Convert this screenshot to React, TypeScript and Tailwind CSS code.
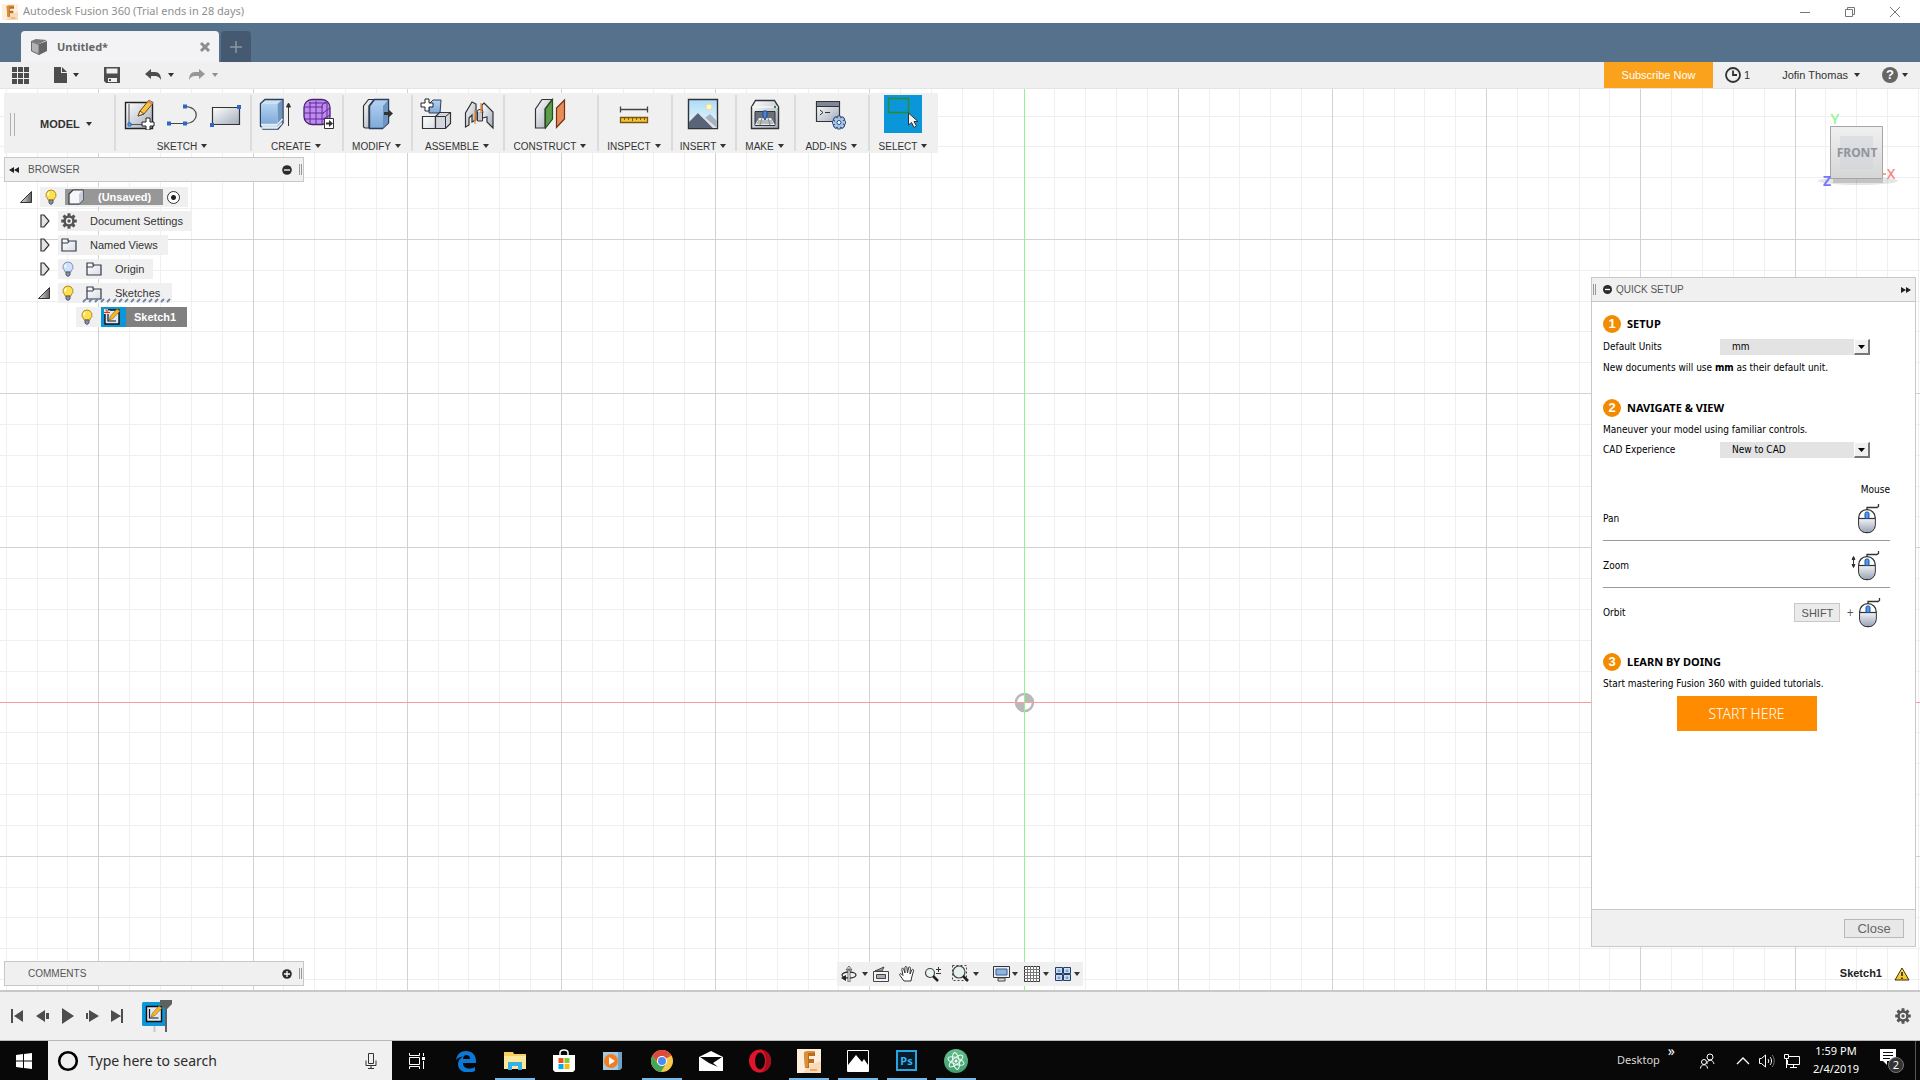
import React from "react";

const SANS = "font-['Liberation_Sans',Arial,sans-serif]";
const UI = "font-['Noto_Sans','Segoe_UI',sans-serif]";
const FORM = "font-['DejaVu_Sans_Condensed',Tahoma,'Noto_Sans',sans-serif]";

type IconProps = { children: React.ReactNode; w?: number; h?: number };

function Icon({ children, w = 32, h = 32 }: IconProps) {
  return (
    <svg width={w} height={h} viewBox={`0 0 ${w} ${h}`} fill="none" aria-hidden="true" className="shrink-0">
      {children}
    </svg>
  );
}

function Caret({ dim = false }: { dim?: boolean }) {
  return (
    <svg width="6" height="4" viewBox="0 0 6 4" aria-hidden="true" className="shrink-0">
      <path d="M0 0h6L3 4z" fill={dim ? "#8f8f8f" : "#333"} />
    </svg>
  );
}

function Defs() {
  return (
    <svg width="0" height="0" className="absolute" aria-hidden="true">
      <defs>
        <linearGradient id="steel" x1="0" y1="0" x2="1" y2="1">
          <stop offset="0" stopColor="#fff" />
          <stop offset="1" stopColor="#a3abba" />
        </linearGradient>
        <linearGradient id="paper" x1="0" y1="0" x2="1" y2="1">
          <stop offset="0" stopColor="#fff" />
          <stop offset="1" stopColor="#d9dde5" />
        </linearGradient>
        <linearGradient id="blue" x1="0" y1="0" x2="0" y2="1">
          <stop offset="0" stopColor="#b4d3f2" />
          <stop offset="1" stopColor="#7ea9d8" />
        </linearGradient>
        <linearGradient id="sky" x1="0" y1="0" x2="0" y2="1">
          <stop offset="0" stopColor="#a9dcf8" />
          <stop offset="1" stopColor="#f2fafe" />
        </linearGradient>
        <linearGradient id="mouse" x1="0" y1="0" x2="0" y2="1">
          <stop offset="0" stopColor="#f1f3f7" />
          <stop offset="1" stopColor="#9aa5b7" />
        </linearGradient>
        <linearGradient id="cube" x1="0" y1="0" x2="0" y2="1">
          <stop offset="0" stopColor="#f0f0f0" />
          <stop offset="1" stopColor="#d6d6d6" />
        </linearGradient>
        <linearGradient id="tri" x1="0" y1="0" x2="1" y2="0">
          <stop offset="0" stopColor="#e5e5e5" />
          <stop offset="1" stopColor="#606060" />
        </linearGradient>
        <linearGradient id="gold" x1="0" y1="0" x2="0" y2="1">
          <stop offset="0" stopColor="#ffef5a" />
          <stop offset="1" stopColor="#f3bd1d" />
        </linearGradient>
        <linearGradient id="atom" x1="0" y1="0" x2="0" y2="1">
          <stop offset="0" stopColor="#62bd8a" />
          <stop offset="1" stopColor="#3f9d6f" />
        </linearGradient>
      </defs>
    </svg>
  );
}

function FusionMark({ size }: { size: number }) {
  return (
    <svg width={size} height={size} viewBox="0 0 24 24" aria-hidden="true" className="shrink-0">
      <path d="M0 0h24v24H0z" fill="#fdeedd" />
      <path d="M12 16l12-4v12H6z" fill="#f8d9b8" />
      <path d="M7 3h11v4h-6v3h5v4h-5v5H8z" fill="#b96c1f" />
      <path d="M7 3l3-1h8l-1 2h-6v14l-3 1z" fill="#dd8f38" />
      <path d="M13 20h7v2h-7z" fill="#f0a868" />
    </svg>
  );
}

function Plus({ x, y }: { x: number; y: number }) {
  return (
    <path
      transform={`translate(${x} ${y})`}
      d="M4 0h4v4h4v4H8v4H4V8H0V4h4z"
      fill="#fff"
      stroke="#222"
      strokeWidth="1"
    />
  );
}

function Gear({ size, color, hole = "#f0f0f0" }: { size: number; color: string; hole?: string }) {
  return (
    <svg width={size} height={size} viewBox="0 0 16 16" aria-hidden="true" className="shrink-0">
      <g fill={color}>
        <circle cx="8" cy="8" r="5.7" />
        {[0, 45, 90, 135].map((a) => (
          <rect key={a} x="6.5" y="0.2" width="3" height="15.6" rx="0.5" transform={`rotate(${a} 8 8)`} />
        ))}
      </g>
      <circle cx="8" cy="8" r="3.2" fill={hole} />
      <circle cx="8" cy="8" r="1.7" fill={color} />
    </svg>
  );
}

/* ---------- window chrome ---------- */

function TitleBar() {
  return (
    <header className={`${UI} flex h-[23px] items-center justify-between bg-white`}>
      <div className="flex items-center gap-[5px] pl-[2px] text-[11px] text-[#8f8f8f]">
        <FusionMark size={16} />
        <h1>Autodesk Fusion 360 (Trial ends in 28 days)</h1>
      </div>
      <div className="flex items-center gap-[33px] pr-[19px]">
        <button aria-label="Minimize">
          <Icon w={12} h={12}><path d="M1 6.500h10" stroke="#777" /></Icon>
        </button>
        <button aria-label="Restore">
          <Icon w={12} h={12}>
            <path d="M1.500 3.500h7v7h-7zM3.500 3V1.500h7v7H9" stroke="#777" />
          </Icon>
        </button>
        <button aria-label="Close window">
          <Icon w={12} h={12}><path d="M1 1l10 10M11 1L1 11" stroke="#777" /></Icon>
        </button>
      </div>
    </header>
  );
}

function TabStrip() {
  return (
    <nav className="flex h-[39px] items-end gap-[2px] bg-[#56718c] pl-[21px]" aria-label="Documents">
      <div className="flex h-[31px] w-[198px] items-center rounded-t bg-[#f3f3f6] pr-[8px] pl-[10px]">
        <Icon w={16} h={16}>
          <path d="M0 2l8 3v11L0 12z" fill="#b2b2b2" />
          <path d="M16 2v10l-8 4V5z" fill="#646464" />
          <path d="M0 2l5-2 11 1-8 4z" fill="#7a7a7a" />
          <path d="M0.500 2.500l7.500 3V15.500L0.500 12z" stroke="#6b6b6b" />
        </Icon>
        <span className={`${UI} ml-[10px] pt-[2px] text-[11px] font-bold text-[#666]`}>Untitled*</span>
        <button aria-label="Close tab" className="ml-auto">
          <Icon w={12} h={12}><path d="M2 2l8 8M10 2l-8 8" stroke="#8c8c8c" strokeWidth="3" /></Icon>
        </button>
      </div>
      <button aria-label="New tab" className="flex h-[31px] w-[30px] items-center justify-center rounded-t bg-[#455a70]">
        <Icon w={12} h={12}><path d="M6 0v12M0 6h12" stroke="#8d97a3" strokeWidth="1.500" /></Icon>
      </button>
    </nav>
  );
}

function QuickBar() {
  return (
    <div className={`${SANS} flex h-[27px] items-center justify-between border-b border-[#e4e4e4] bg-[#f0f0f0] text-[11px] text-[#333]`}>
      <div className="flex items-center pl-[12px]">
        <button aria-label="Data panel">
          <Icon w={17} h={17}>
            <path d="M0 0h5v5H0zM6 0h5v5H6zM12 0h5v5h-5zM0 6h5v5H0zM6 6h5v5H6zM12 6h5v5h-5zM0 12h5v5H0zM6 12h5v5H6zM12 12h5v5h-5z" fill="#4d4d4d" />
          </Icon>
        </button>
        <button aria-label="File" className="ml-[25px] flex items-center gap-[6px]">
          <Icon w={13} h={16}><path d="M0 0h7v6h6v10H0zM8 0l5 5H8z" fill="#4d4d4d" /></Icon>
          <Caret />
        </button>
        <button aria-label="Save" className="ml-[25px]">
          <Icon w={16} h={16}>
            <path d="M0 0h16v16H2l-2-2z" fill="#4d4d4d" />
            <path d="M2.500 1.500h11v5h-11zM4 11h9v4H4z" fill="#f0f0f0" />
            <path d="M5 12h2v2H5z" fill="#4d4d4d" />
          </Icon>
        </button>
        <button aria-label="Undo" className="ml-[25px] flex items-center gap-[7px]">
          <Icon w={16} h={12}><path d="M0 5l6-5v3h4c4 0 6 3 6 8-2-3-3-4-6-4H6v3z" fill="#4d4d4d" /></Icon>
          <Caret />
        </button>
        <button aria-label="Redo" className="ml-[15px] flex items-center gap-[7px]">
          <Icon w={16} h={12}><path d="M16 5l-6-5v3H6C2 3 0 6 0 11c2-3 3-4 6-4h4v3z" fill="#979797" /></Icon>
          <Caret dim />
        </button>
      </div>
      <div className="flex items-center">
        <button className="h-[26px] w-[109px] bg-[#faa21c] text-center text-white">Subscribe Now</button>
        <button aria-label="Job status, 1" className="ml-[12px] flex items-center gap-[3px]">
          <Icon w={16} h={16}>
            <circle cx="8" cy="8" r="7" stroke="#333" strokeWidth="1.800" />
            <path d="M8 3.500V8h4" stroke="#333" strokeWidth="1.800" />
          </Icon>
          1
        </button>
        <button className="ml-[32px] flex items-center gap-[6px]">Jofin Thomas <Caret /></button>
        <button aria-label="Help" className="mr-[12px] ml-[22px] flex items-center gap-[4px]">
          <span className="flex size-[16px] items-center justify-center rounded-full bg-[#666] text-[13px] font-bold text-white">?</span>
          <Caret />
        </button>
      </div>
    </div>
  );
}

/* ---------- toolbar ---------- */

const sketchIcon = (
  <Icon>
    <path d="M2.500 4.500h27v26h-27z" fill="url(#steel)" stroke="#222" strokeWidth="1.400" />
    <path d="M6 6v20.500M6 26.500h16" stroke="#555" />
    <path d="M5 25h3v3H5z" fill="#58aef5" stroke="#2268c8" />
    <path d="M15 18l2-5L26 2l4 3-9 11z" fill="#f9c33a" stroke="#6a4a1c" />
    <path d="M26 2l4 3-1.500 2-4-3z" fill="#d98a63" />
    <path d="M15 18l2-5 4 3z" fill="#f6e3c3" stroke="#6a4a1c" />
    <Plus x={19} y={20} />
  </Icon>
);
const lineIcon = (
  <Icon>
    <path d="M3 25.500h16c15 0 15-17 0-17" stroke="#444" strokeWidth="1.200" />
    <path d="M1 23.500h4v4H1zM17 23.500h4v4h-4zM17 6.500h4v4h-4z" fill="#2f66cc" />
  </Icon>
);
const rectIcon = (
  <Icon>
    <path d="M3.500 9.500h27v17h-27z" fill="url(#steel)" stroke="#333" strokeWidth="1.200" />
    <path d="M1 25h4v4H1zM28 7h4v4h-4z" fill="#2f66cc" />
  </Icon>
);
const extrudeIcon = (
  <Icon>
    <path d="M1.500 28V5.500L6 1.500h18V25l-5 6H4z" fill="#cfe1f4" stroke="#2b3f5c" strokeWidth="1.400" />
    <path d="M2 6h16v20H2z" fill="url(#blue)" />
    <path d="M18.500 6L23 2v23l-4.500 4z" fill="#6f94bf" />
    <path d="M2 26.500h16.500L23.500 21M2 30h16l5-5" stroke="#e8eef5" strokeWidth="1.500" />
    <path d="M29.500 28V7M27.500 9l2-4 2 4z" stroke="#333" fill="#333" />
  </Icon>
);
const formIcon = (
  <Icon>
    <rect x="2" y="1.500" width="26" height="25" rx="8" fill="#c08bf0" stroke="#44256c" strokeWidth="1.300" />
    <path d="M2 9h19M2 15h20M3 21h19M8 4v22M14 3v23M20 7v19M7 5h18M20 7l5-4M21 15l7-5M21 21l7-4M25 4v20" stroke="#5f2d96" />
    <path d="M22.500 20.500h9v10h-9z" fill="#fff" stroke="#333" />
    <path d="M24 24.500h3V22l4 3.500-4 3.500v-2.500h-3z" fill="#333" />
  </Icon>
);
const modifyIcon = (
  <Icon>
    <path d="M2.500 29V8l5-6.500H13L8 8v22H4z" fill="url(#steel)" stroke="#333" strokeWidth="1.200" />
    <path d="M8.500 30.500V8l5-6.500h14V25l-6 5.500z" fill="url(#blue)" stroke="#2b3f5c" strokeWidth="1.400" />
    <path d="M22 8l5-6v23l-5 5z" fill="#6f94bf" />
    <path d="M23 14h4v-3l5 4.500-5 4.500v-3h-4z" fill="#333" />
  </Icon>
);
const componentIcon = (
  <Icon>
    <path d="M9 15V6l4-4h8l-1 13z" fill="url(#blue)" stroke="#2b3f5c" />
    <path d="M2.500 18.500h13v12h-13z" fill="url(#paper)" stroke="#333" strokeWidth="1.200" />
    <path d="M15.500 18.500l4-4h11v11l-5 5h-10z" fill="#d3d6de" stroke="#333" strokeWidth="1.200" />
    <path d="M15.500 18.500h10l5-4M25.500 18.500v12" stroke="#333" />
    <Plus x={1} y={1} />
  </Icon>
);
const jointIcon = (
  <Icon>
    <path d="M2.500 29V15L9 4l4 2v16l-4 2v-7l-3 3v7z" fill="url(#steel)" stroke="#333" strokeWidth="1.200" />
    <path d="M21 5l9 9v16l-6-6v-5l-5 1V7z" fill="url(#steel)" stroke="#333" strokeWidth="1.200" />
    <ellipse cx="17" cy="14" rx="3" ry="2.500" fill="#e8eaef" stroke="#333" />
    <path d="M14.500 14v9h5v-9" fill="#c3c9d3" stroke="#333" />
    <path d="M12 12v14M18 5v10" stroke="#f0872d" strokeWidth="1.300" />
  </Icon>
);
const constructIcon = (
  <Icon>
    <path d="M1.500 30V11L8 1.500h10L11 11v19z" fill="url(#steel)" stroke="#333" strokeWidth="1.200" />
    <path d="M11.500 30V11l7-9.500V21z" fill="#5c9e49" stroke="#264d1d" strokeWidth="1.200" />
    <path d="M22.500 29.500V10l8-8v19z" fill="#e88d58" stroke="#703312" strokeWidth="1.200" />
  </Icon>
);
const inspectIcon = (
  <Icon>
    <path d="M2 11.500h28M2.500 8.500v6M29.500 8.500v6" stroke="#444" strokeWidth="1.300" />
    <path d="M2.500 19.500h27v5h-27z" fill="#f4c52f" stroke="#7a5614" strokeWidth="1.300" />
    <path d="M6.500 20v2M10.500 20v2M14.500 20v3M18.500 20v2M22.500 20v2M26.500 20v2" stroke="#7a5614" />
  </Icon>
);
const insertIcon = (
  <Icon>
    <path d="M1.500 1.500h29v29h-29z" fill="url(#sky)" stroke="#333" strokeWidth="1.400" />
    <circle cx="22" cy="9" r="3" fill="#fff8c8" stroke="#f4d98a" />
    <path d="M14 23l9-7 7 7v7H14z" fill="#a7b2c0" />
    <path d="M2 24l9-9 15 15H2z" fill="#596477" />
    <path d="M11 15l15 15h4L14 16z" fill="#dfe4ea" />
  </Icon>
);
const makeIcon = (
  <Icon>
    <path d="M2.500 9l4-6.500h19l4 6.500v21.500h-27z" fill="url(#steel)" stroke="#333" strokeWidth="1.400" />
    <path d="M3 9h26" stroke="#fff" />
    <path d="M6 13.500h20v14H6z" fill="#6a6f79" stroke="#333" />
    <path d="M6 27l4-7h12l4 7z" fill="#e8eaee" />
    <path d="M9 23h14M8 25h16M13 20l-2 7M19 20l2 7" stroke="#888" />
    <path d="M14 13h4v5l-2 4-2-4z" fill="#4686dd" stroke="#1f4a8c" />
    <path d="M25 8h2v2h-2z" fill="#179a22" />
  </Icon>
);
const addinsIcon = (
  <Icon>
    <path d="M1.500 3.500h23v20h-23z" fill="url(#steel)" stroke="#333" strokeWidth="1.200" />
    <path d="M2 4h22v4H2z" fill="#7d8796" />
    <path d="M2 8.500h22" stroke="#333" />
    <path d="M5 12l3 2.500L5 17M10 14.500h5" stroke="#333" />
    <g fill="#a9c6e8" stroke="#2d4a77">
      {[0, 45, 90, 135].map((a) => (
        <rect key={a} x="22" y="18" width="4" height="13" rx="1" transform={`rotate(${a} 24 24.500)`} />
      ))}
    </g>
    <circle cx="24" cy="24.500" r="4.500" fill="#a9c6e8" />
    <circle cx="24" cy="24.500" r="2" fill="#fff" stroke="#2d4a77" />
  </Icon>
);
const selectIcon = (
  <span className="flex size-[38px] items-center justify-center bg-[#0a96d8]">
    <Icon w={38} h={38}>
      <path d="M4.500 3.500h20v14h-20z" stroke="#2f8a2c" strokeWidth="1.400" />
      <path d="M24.500 18v12l3-2.500 2.500 5 2.500-1.500-2.500-4.500h4z" fill="#f4f4f4" stroke="#333" />
    </Icon>
  </span>
);

type Group = { label: string; width: string; icons: React.ReactNode[] };

const groups: Group[] = [
  { label: "SKETCH", width: "w-[136px]", icons: [sketchIcon, lineIcon, rectIcon] },
  { label: "CREATE", width: "w-[92px]", icons: [extrudeIcon, formIcon] },
  { label: "MODIFY", width: "w-[69px]", icons: [modifyIcon] },
  { label: "ASSEMBLE", width: "w-[92px]", icons: [componentIcon, jointIcon] },
  { label: "CONSTRUCT", width: "w-[94px]", icons: [constructIcon] },
  { label: "INSPECT", width: "w-[74px]", icons: [inspectIcon] },
  { label: "INSERT", width: "w-[64px]", icons: [insertIcon] },
  { label: "MAKE", width: "w-[59px]", icons: [makeIcon] },
  { label: "ADD-INS", width: "w-[74px]", icons: [addinsIcon] },
  { label: "SELECT", width: "w-[70px]", icons: [selectIcon] },
];

function Toolbar() {
  return (
    <div className={`${SANS} flex h-[60px] w-fit items-start bg-[#f0f0f0] pt-[2px] text-[10px] text-[#333]`} role="toolbar">
      <div className="flex w-[110px] items-center self-center">
        <span className="ml-[6px] h-[23px] w-[5px] border-x border-[#b0b0b0]" />
        <button className="ml-[25px] flex items-center gap-[6px] text-[11px] font-bold">MODEL <Caret /></button>
      </div>
      {groups.map((g) => (
        <div key={g.label} className={`${g.width} flex h-[56px] flex-col items-center justify-between border-l-2 border-[#dcdcdc] pr-[2px]`}>
          <div className="flex h-[38px] items-center gap-[11px]">
            {g.icons.map((icon, i) => (
              <button key={i} aria-label={`${g.label} tool ${i + 1}`}>{icon}</button>
            ))}
          </div>
          <button className="flex h-[10px] items-center gap-[4px]">{g.label} <Caret /></button>
        </div>
      ))}
    </div>
  );
}

/* ---------- browser tree ---------- */

function Bulb({ off = false }: { off?: boolean }) {
  return (
    <Icon w={12} h={16}>
      <path d="M6 1a5 5 0 0 0-3 9v1h6v-1a5 5 0 0 0-3-9z" fill={off ? "#cfe2fb" : "#ffe14a"} stroke={off ? "#7f93b8" : "#b08a2c"} />
      <path d="M4 3.500c-1 1-1 2-1 3" stroke="#fff" strokeWidth="1.500" />
      <path d="M4 11h4v3l-2 1.500L4 14z" fill="#8890a0" stroke="#555c6c" />
    </Icon>
  );
}

function Folder() {
  return (
    <Icon w={16} h={14}>
      <path d="M1 13V1h6v2h8v10z" fill="url(#paper)" stroke="#333a48" strokeWidth="1.200" />
      <path d="M1 5h6l1-2" stroke="#333a48" />
    </Icon>
  );
}

function Closed() {
  return <Icon w={10} h={14}><path d="M1 1l3 0 5 6-5 6H1z" fill="#e4e4e4" stroke="#333" strokeWidth="1.200" /></Icon>;
}

function Open() {
  return <Icon w={12} h={12}><path d="M11.500 0.500v11H0.500z" fill="url(#tri)" stroke="#333" /></Icon>;
}

function SketchThumb() {
  return (
    <Icon w={16} h={16}>
      <path d="M1 1h14v14H1z" fill="#dfe9f7" stroke="#111" strokeWidth="1.400" />
      <path d="M4 5v7h8" stroke="#111" strokeWidth="1.200" />
      <path d="M5 11l1.500-4L13 0l3 2-7 7.500z" fill="#f7b51e" stroke="#8f5c12" strokeWidth="0.600" />
      <path d="M0 0h4v1.500h2V5H0z" fill="#f6d9cf" />
      <path d="M1.500 1h2M0 3.500h6M3 1v3" stroke="#c8402a" strokeWidth="1.200" />
    </Icon>
  );
}

function PanelBar({ title, open }: { title: string; open: boolean }) {
  return (
    <div className={`${SANS} flex h-[25px] w-[300px] items-center border border-[#c8c8c8] bg-[#f0f0f0] text-[10px] text-[#555]`}>
      <span className="flex w-[23px] justify-start pl-[4px]">
        {open && <Icon w={10} h={6}><path d="M5 0v6L0 3zM10 0v6L5 3z" fill="#222" /></Icon>}
      </span>
      <h2>{title}</h2>
      <button aria-label={open ? "Collapse" : "Expand"} className="ml-auto">
        <Icon w={10} h={10}>
          <circle cx="5" cy="5" r="4.800" fill="#2b2b2b" />
          <path d={open ? "M2 5h6" : "M2 5h6M5 2v6"} stroke="#fff" strokeWidth="1.300" />
        </Icon>
      </button>
      <span className="mr-[1px] ml-[7px] h-[11px] w-[3px] border-x border-[#999]" />
    </div>
  );
}

function Tree() {
  const box = "flex h-[20px] items-center bg-[#f0f0f0]";
  return (
    <ul className={`${SANS} mt-[5px] flex flex-col gap-[4px] text-[11px] text-[#333]`}>
      <li className="flex items-center pl-[16px]">
        <Open />
        <div className={`${box} ml-[8px] pr-[8px] pl-[5px]`}>
          <Bulb />
          <span className="mr-[4px] ml-[8px] flex h-[16px] w-[98px] items-center gap-[14px] bg-[#979797] pl-[3px] font-bold text-white">
            <Icon w={16} h={16}>
              <path d="M1 5l4-4h10v10l-4 4H1z" fill="#f5f7fa" stroke="#333a48" strokeWidth="1.200" />
              <path d="M11 5l4-4v10l-4 4z" fill="#c9ced8" />
            </Icon>
            (Unsaved)
          </span>
          <input type="radio" name="active" defaultChecked aria-label="Activate component" className="size-[13px] appearance-none rounded-full border border-[#333] bg-white bg-[radial-gradient(circle,#222_2px,transparent_3px)]" />
        </div>
      </li>
      <li className="flex items-center pl-[36px]">
        <Closed />
        <div className={`${box} ml-[8px] gap-[13px] pr-[8px] pl-[3px]`}><Gear size={16} color="#555" />Document Settings</div>
      </li>
      <li className="flex items-center pl-[36px]">
        <Closed />
        <div className={`${box} ml-[8px] gap-[13px] pr-[10px] pl-[3px]`}><Folder />Named Views</div>
      </li>
      <li className="flex items-center pl-[36px]">
        <Closed />
        <div className={`${box} ml-[8px] pr-[9px] pl-[4px]`}><Bulb off /><span className="mr-[13px] ml-[12px]"><Folder /></span>Origin</div>
      </li>
      <li className="flex items-center pl-[34px]">
        <Open />
        <div className={`${box} relative ml-[8px] pr-[12px] pl-[4px]`}>
          <Bulb /><span className="mr-[13px] ml-[12px]"><Folder /></span>Sketches
          <svg width="90" height="5" viewBox="0 0 90 5" className="absolute bottom-0 left-[24px]" aria-hidden="true">
            {Array.from({ length: 15 }, (_, i) => (
              <path key={i} d={`M${i * 6 + 1} 4l3-3`} stroke="#6d83a8" strokeWidth="1.800" />
            ))}
          </svg>
        </div>
      </li>
      <li className="flex items-center pl-[72px]">
        <div className={`${box} w-[25px] pl-[5px]`}><Bulb /></div>
        <div className="flex h-[20px] w-[25px] items-center pl-[3px] bg-[#0a96d8]"><SketchThumb /></div>
        <div className="flex h-[20px] w-[61px] items-center bg-[#808080] pl-[8px] font-bold text-white">Sketch1</div>
      </li>
    </ul>
  );
}

/* ---------- canvas ---------- */

function CanvasGrid() {
  const step = 30.84;
  const cx = 1024;
  const cy = 613;
  const range = (n: number) => Array.from({ length: 2 * n + 1 }, (_, i) => i - n);
  const cols = range(60).filter((i) => i !== 0);
  const rows = range(40).filter((i) => i !== 0);
  const vLine = (i: number) => <path key={i} d={`M${Math.floor(cx + i * step) + 0.5} 0v4000`} />;
  const hLine = (i: number) => <path key={i} d={`M0 ${Math.floor(cy + i * step) + 0.5}h6000`} />;
  return (
    <svg className="absolute inset-0 h-full w-full" aria-hidden="true">
      <g stroke="#efefef">
        {cols.filter((i) => i % 5 !== 0).map(vLine)}
        {rows.filter((i) => i % 5 !== 0).map(hLine)}
      </g>
      <g stroke="#d2d2d2">
        {cols.filter((i) => i % 5 === 0).map(vLine)}
        {rows.filter((i) => i % 5 === 0).map(hLine)}
      </g>
      <circle cx={cx + 0.5} cy={cy + 0.5} r="8.500" fill="#fff" stroke="#b9b9b9" strokeWidth="2.500" />
      <path d={`M${cx} ${cy}v-9a9 9 0 0 1 9 9zM${cx} ${cy}v9a9 9 0 0 1-9-9z`} fill="#b9b9b9" />
      <path d={`M0 ${cy + 0.5}h6000`} stroke="#f99" />
      <path d={`M${cx + 0.5} 0v4000`} stroke="#8df58d" />
    </svg>
  );
}

function ViewCube() {
  return (
    <svg width="88" height="90" viewBox="0 0 88 90" className="mt-[15px] mr-[17px] self-end" role="img" aria-label="View cube">
      <ellipse cx="43" cy="77" rx="40" ry="4" fill="#000" opacity="0.100" />
      <path d="M18 75h50v4H18z" fill="#000" opacity="0.150" />
      <path d="M15.500 22.500h52v52h-52z" fill="url(#cube)" stroke="#a5a5a5" />
      <path d="M25 32h33v33H25z" fill="#cfd3da" opacity="0.500" />
      <g className="font-['Noto_Sans',sans-serif]" textAnchor="middle">
        <text x="42" y="53" fontSize="12" fontWeight="700" fill="#92959c">FRONT</text>
        <text x="20" y="20" fontSize="15" fontWeight="500" fill="#8df58d">Y</text>
        <text x="12" y="82" fontSize="14" fontWeight="700" fill="#7777fa">Z</text>
        <text x="76" y="75" fontSize="14" fontWeight="500" fill="#f98080">X</text>
      </g>
      <path d="M68 70h3" stroke="#f98080" strokeWidth="1.500" />
    </svg>
  );
}

/* ---------- quick setup ---------- */

function Step({ n, title, className }: { n: number; title: string; className: string }) {
  return (
    <h3 className={`${className} ${UI} flex h-[18px] items-center gap-[6px] text-[11px] font-bold`}>
      <span className="flex size-[18px] items-center justify-center rounded-full bg-[#f38b00] font-['Liberation_Sans',sans-serif] text-[13px] text-white">{n}</span>
      {title}
    </h3>
  );
}

function Field({ id, label, value, className }: { id: string; label: string; value: string; className: string }) {
  return (
    <div className={`${className} flex h-[16px] items-center`}>
      <label htmlFor={id} className="w-[117px]">{label}</label>
      <div className="relative h-[16px] w-[150px]">
        <select id={id} className="block h-[16px] w-full appearance-none bg-[#e3e3e3] pl-[12px] leading-[16px]">
          <option>{value}</option>
        </select>
        <span className="pointer-events-none absolute top-0 right-0 flex h-[16px] w-[16px] items-center justify-center border-t border-r-2 border-b-2 border-l border-t-white border-r-[#777] border-b-[#777] border-l-white bg-[#f0f0f0]">
          <svg width="7" height="4" viewBox="0 0 7 4" aria-hidden="true"><path d="M0 0h7L3.500 4z" fill="#000" /></svg>
        </span>
      </div>
    </div>
  );
}

function MouseIcon({ arrows = false }: { arrows?: boolean }) {
  return (
    <Icon w={30} h={32}>
      {arrows && <path d="M3.500 8v8M2 9.500l1.500-3L5 9.500zM2 14.500l1.500 3 1.500-3z" stroke="#333" fill="#333" />}
      <path d="M17 7V4.500h10l1.500-1V1" stroke="#333" strokeWidth="1.300" />
      <rect x="8.700" y="6.700" width="16.500" height="23" rx="8" fill="#fff" stroke="#333" strokeWidth="1.300" />
      <path d="M9.300 15.500h15.300v6c0 5-3 7.600-7.600 7.600s-7.700-2.600-7.700-7.600z" fill="url(#mouse)" />
      <path d="M9 15.500h16" stroke="#333" strokeWidth="1.200" />
      <rect x="15" y="9" width="4" height="6.500" rx="1.500" fill="#4d9bf0" stroke="#1a4d96" />
    </Icon>
  );
}

function QuickSetup() {
  return (
    <section aria-label="Quick setup" className="mt-[83px] mr-[4px] flex w-[325px] flex-1 flex-col border border-[#c8c8c8] bg-white">
      <header className={`${SANS} flex h-[24px] items-center border-b border-[#c8c8c8] bg-[#f0f0f0] text-[10px] text-[#555]`}>
        <span className="ml-[1px] h-[11px] w-[3px] border-x border-[#999]" />
        <button aria-label="Collapse" className="mr-[4px] ml-[7px]">
          <Icon w={9} h={9}>
            <circle cx="4.500" cy="4.500" r="4.500" fill="#2b2b2b" />
            <path d="M2 4.500h5" stroke="#fff" strokeWidth="1.300" />
          </Icon>
        </button>
        <h2>QUICK SETUP</h2>
        <span className="mr-[4px] ml-auto">
          <Icon w={10} h={6}><path d="M0 0v6l5-3zM5 0v6l5-3z" fill="#222" /></Icon>
        </span>
      </header>
      <div className={`${FORM} flex flex-1 flex-col pr-[25px] pl-[11px] text-[10px] leading-[16px] text-black`}>
        <Step n={1} title="SETUP" className="mt-[13px]" />
        <Field id="units" label="Default Units" value="mm" className="mt-[6px]" />
        <p className="mt-[5px]">New documents will use <b>mm</b> as their default unit.</p>
        <Step n={2} title="NAVIGATE & VIEW" className="mt-[23px]" />
        <p className="mt-[5px]">Maneuver your model using familiar controls.</p>
        <Field id="cad" label="CAD Experience" value="New to CAD" className="mt-[4px]" />
        <p className="mt-[24px] text-right">Mouse</p>
        <div className="flex h-[43px] items-center justify-between border-b border-[#999] pr-[10px]">Pan<MouseIcon /></div>
        <div className="flex h-[47px] items-center justify-between border-b border-[#999] pt-[4px] pr-[10px]">Zoom<MouseIcon arrows /></div>
        <div className="flex h-[47px] items-center pt-[2px] pr-[9px]">
          <span>Orbit</span>
          <kbd className="mr-[6px] ml-auto flex h-[19px] w-[46px] items-center justify-center border border-[#c8c8c8] bg-[#ebebeb] font-['Liberation_Sans',sans-serif] text-[11px] text-[#555]">SHIFT</kbd>
          <span className="-mr-[3px] text-[#555]">+</span>
          <MouseIcon />
        </div>
        <Step n={3} title="LEARN BY DOING" className="mt-[18px]" />
        <p className="mt-[5px]">Start mastering Fusion 360 with guided tutorials.</p>
        <button className="mt-[4px] h-[35px] w-[140px] self-center bg-[#ff8c00] font-['Noto_Sans',sans-serif] text-[14px] font-light text-white">START HERE</button>
      </div>
      <footer className="flex h-[37px] items-center justify-end border-t border-[#c8c8c8] bg-[#f0f0f0] pr-[11px]">
        <button className={`${SANS} h-[19px] w-[60px] border border-[#b8b8b8] bg-[#e8e8e8] text-[13px] leading-[17px] text-[#666]`}>Close</button>
      </footer>
    </section>
  );
}

/* ---------- bottom bars ---------- */

function NavBar() {
  return (
    <div className="flex h-[24px] items-center bg-[#f0f0f0] pr-[3px] pl-[4px]" role="toolbar" aria-label="Navigation">
      <button aria-label="Orbit" className="flex items-center gap-[5px]">
        <Icon w={16} h={16}>
          <ellipse cx="8" cy="9" rx="7" ry="3" stroke="#333" strokeWidth="1.300" />
          <path d="M7 3h2v13H7zM5 4l3-4 3 4z" fill="#fff" stroke="#444" strokeWidth="0.800" />
          <path d="M0 12l5-3v6z" fill="#222" />
        </Icon>
        <Caret />
      </button>
      <button aria-label="Look at" className="ml-[5px]">
        <Icon w={16} h={16}>
          <path d="M2 5l9-4-2 4z" fill="#aab" stroke="#444" />
          <path d="M0.500 5.500h15v10H0.500z" fill="#f4f5f7" stroke="#444" />
          <path d="M3.500 8.500h9v4h-9z" fill="#a5acba" stroke="#444" />
        </Icon>
      </button>
      <button aria-label="Pan" className="ml-[10px]">
        <Icon w={16} h={16}>
          <path d="M5 15L1 9.500c-1-1.500.5-2.500 1.500-1.500L4 9.500 2.800 3.500c-.3-1.500 1.500-1.700 1.900-.4L6 7 5.900 1.600c0-1.500 1.900-1.500 2 0L8.500 7l1-5.200c.3-1.300 2-1 1.900.4L11 8l1.800-4c.6-1.200 2.200-.6 1.800.6L12.500 12l-.5 3z" fill="#fff" stroke="#333" />
        </Icon>
      </button>
      <button aria-label="Zoom" className="ml-[9px]">
        <Icon w={18} h={16}>
          <circle cx="6" cy="7" r="4.500" fill="#e9f2f5" stroke="#444" strokeWidth="1.200" />
          <path d="M9 10l5 5" stroke="#222" strokeWidth="2.500" />
          <path d="M12 3.500h5M14.500 1v5M12 7.500h5" stroke="#333" />
        </Icon>
      </button>
      <button aria-label="Zoom window" className="ml-[9px] flex items-center gap-[4px]">
        <Icon w={18} h={17}>
          <path d="M1.500 0.500h14v15h-14z" stroke="#444" strokeDasharray="2 2" />
          <circle cx="8" cy="7" r="6" fill="#e4f1ee" stroke="#444" strokeWidth="1.200" />
          <path d="M12 11l5 5" stroke="#222" strokeWidth="2.500" />
        </Icon>
        <Caret />
      </button>
      <button aria-label="Display settings" className="ml-[14px] flex items-center gap-[2px]">
        <Icon w={17} h={16}>
          <path d="M0.500 0.500h16v11h-16z" fill="#e8eef6" stroke="#333" />
          <path d="M3 3h11v6H3z" fill="#8fb4e2" stroke="#3a5c90" />
          <path d="M5 12h7v3H5z" fill="#ddd" stroke="#444" />
        </Icon>
        <Caret />
      </button>
      <button aria-label="Grid settings" className="ml-[6px] flex items-center gap-[3px]">
        <Icon w={16} h={16}>
          <path d="M0.500 0.500h15v15h-15z" fill="#fff" stroke="#333" />
          <path d="M3.500 0v16M6.500 0v16M9.500 0v16M12.500 0v16M0 3.500h16M0 6.500h16M0 9.500h16M0 12.500h16" stroke="#777" />
        </Icon>
        <Caret />
      </button>
      <button aria-label="Viewports" className="ml-[6px] flex items-center gap-[3px]">
        <Icon w={16} h={14}>
          <path d="M0.500 0.500h7v6h-7zM8.500 0.500h7v6h-7zM0.500 7.500h7v6h-7zM8.500 7.500h7v6h-7z" fill="#c9dcf3" stroke="#263f66" />
          <path d="M3 3h2v1.500H3zM11 3h2v1.500h-2zM3 10h2v1.500H3zM11 10h2v1.500h-2z" fill="#8fb4e2" stroke="#7a9fd0" />
        </Icon>
        <Caret />
      </button>
    </div>
  );
}

function Timeline() {
  const items: [string, string][] = [
    ["Go to start", "M0 1h2v14H0zM12 2v12L3 8z"],
    ["Step back", "M9 2v12L0 8zM10 5h3v6h-3z"],
    ["Play", "M1 0l12 8-12 8z"],
    ["Step forward", "M0 5h2v6H0zM3 2v12l10-6z"],
    ["Go to end", "M0 2v12l10-6zM10 1h2v14h-2z"],
  ];
  return (
    <div className="flex h-[51px] items-center justify-between border-t-2 border-b border-t-[#c8c8c8] border-b-[#b8b8b8] bg-[#f0f0f0] pr-[9px] pl-[11px]">
      <div className="flex items-center gap-[12px]">
        {items.map(([label, d]) => (
          <button key={label} aria-label={label}><Icon w={13} h={16}><path d={d} fill="#4d4d4d" /></Icon></button>
        ))}
        <button aria-label="Sketch1 feature" className="ml-[6px]">
          <Icon w={32} h={34}>
            <path d="M12.500 26v7" stroke="#c8c8c8" strokeWidth="2" />
            <rect x="0" y="3" width="24" height="24" rx="1.500" fill="#0a96d8" />
            <path d="M4.500 7.500h15v15h-15z" fill="#dfe9f7" stroke="#111" strokeWidth="1.400" />
            <path d="M7.500 10v9h9" stroke="#111" strokeWidth="1.200" />
            <path d="M9 18l1.500-4L17 7l3 2-7 7.500z" fill="#f7b51e" stroke="#8f5c12" strokeWidth="0.600" />
            <path d="M18 1h12v4l-5 5v23h-2V10l-5-5z" fill="#606060" />
          </Icon>
        </button>
      </div>
      <button aria-label="Timeline settings"><Gear size={16} color="#555" /></button>
    </div>
  );
}

type App = { name: string; running: boolean; art: React.ReactNode };

const apps: App[] = [
  {
    name: "Task view", running: false,
    art: <Icon w={16} h={16}><path d="M0.500 0v2.500h10V0M0.500 16v-2.500h10V16M0.500 4.500h10v7H0.500zM14.500 0v3M14.500 8v8" stroke="#fff" /><path d="M13 4h3v3h-3z" fill="#fff" /></Icon>,
  },
  {
    name: "Edge", running: false,
    art: <Icon w={22} h={22}><path d="M1 10C2 4 6 1 11 1c6 0 10 4 10 10v2H8c0 4 3 5.500 6.500 5.500 2 0 3.500-.5 5.500-1.500v4c-2 1-4 1.500-7 1.500C7 22.500 3 19 3 14c0-3 2-6 5-7.500C4.500 7 2.500 8 1 10zm7-1h7c0-2.500-1.300-4-3.500-4S8.300 6.500 8 9z" fill="#0b78d7" /></Icon>,
  },
  {
    name: "File Explorer", running: true,
    art: <Icon w={22} h={20}><path d="M0 1h9l1 2h12v15H0z" fill="#f7cf61" /><path d="M0 5h22v13H0z" fill="#fde79b" /><path d="M4 19v-8h14v8h-4v-4H8v4z" fill="#35b1e8" /></Icon>,
  },
  {
    name: "Store", running: false,
    art: <Icon w={24} h={24}><path d="M8 7V4c0-4 8-4 8 0v3" stroke="#fff" strokeWidth="1.500" /><path d="M1 6h22v15l-2 2H3l-2-2z" fill="#fff" /><path d="M6.500 9h5v5h-5z" fill="#f1511b" /><path d="M12.500 9h5v5h-5z" fill="#80cc28" /><path d="M6.500 15h5v5h-5z" fill="#00adef" /><path d="M12.500 15h5v5h-5z" fill="#fbbc09" /></Icon>,
  },
  {
    name: "Media Player", running: false,
    art: <Icon w={20} h={20}><path d="M3 1h16v16l-2 2H3z" fill="#6fa3c7" /><path d="M0 1h15v18H0z" fill="#a5cbe3" /><circle cx="8" cy="10" r="7" fill="#ef7d22" /><path d="M6 6l6 4-6 4z" fill="#fff" /></Icon>,
  },
  {
    name: "Chrome", running: true,
    art: (
      <Icon w={22} h={22}>
        <circle cx="11" cy="11" r="11" fill="#fbc94a" />
        <path d="M1.500 5.500A11 11 0 0 1 20.500 5.500L11 6a5 5 0 0 0-5 6z" fill="#dc4a3d" />
        <path d="M1.500 5.500A11 11 0 0 0 10 22l5-8.500a5 5 0 0 1-8.300 0z" fill="#45a55a" />
        <path d="M20.500 5.500H11v5z" fill="#dc4a3d" />
        <circle cx="11" cy="11" r="5" fill="#fff" /><circle cx="11" cy="11" r="4" fill="#4b8bf4" />
      </Icon>
    ),
  },
  {
    name: "Mail", running: false,
    art: <Icon w={24} h={20}><path d="M0 6l12-6 12 6v14H0z" fill="#fff" /><path d="M1 6h22l-9 6 5 4-9-4z" fill="#080808" /></Icon>,
  },
  {
    name: "Opera", running: false,
    art: <Icon w={24} h={24}><ellipse cx="12" cy="12" rx="11" ry="11.500" fill="#e3132a" /><path d="M12 .5a11 11.500 0 0 1 0 23c4-1 6-5 6-11.500S16 1.500 12 .5z" fill="#a50e1d" /><ellipse cx="12" cy="12" rx="5" ry="8.500" fill="#080808" /></Icon>,
  },
  { name: "Fusion 360", running: true, art: <FusionMark size={24} /> },
  {
    name: "Photos", running: true,
    art: <Icon w={22} h={22}><path d="M0.500 0.500h21v21h-21z" fill="#080808" stroke="#fff" /><path d="M1 15l8-10 6 7 2-3 4 6v6H1z" fill="#fff" /></Icon>,
  },
  {
    name: "Photoshop", running: true,
    art: <span className="flex size-[21px] items-center justify-center border-2 border-[#27a7df] bg-[#0a1c2b] font-['Noto_Sans',sans-serif] text-[11px] leading-none font-bold text-[#31b5f0]">Ps</span>,
  },
  {
    name: "Atom", running: true,
    art: (
      <Icon w={24} h={24}>
        <circle cx="12" cy="12" r="12" fill="url(#atom)" />
        {[20, 80, 140].map((a) => <ellipse key={a} cx="12" cy="12" rx="8.500" ry="3.200" stroke="#e6f7ec" strokeWidth="1.100" transform={`rotate(${a} 12 12)`} />)}
        <circle cx="12" cy="12" r="1.500" fill="#fff" />
      </Icon>
    ),
  },
];

function Taskbar() {
  return (
    <footer className={`${UI} flex h-[39px] items-stretch bg-[#080808] text-white`}>
      <button aria-label="Start" className="flex w-[48px] items-center justify-center">
        <Icon w={16} h={16}><path d="M0 2l7-1v6.500H0zM8 1l8-1v7.500H8zM0 8.500h7V15l-7-1zM8 8.500h8V16l-8-1z" fill="#fff" /></Icon>
      </button>
      <label className="flex w-[344px] items-center bg-[#f0f0f0] pr-[15px] pl-[9px]">
        <Icon w={22} h={22}><circle cx="11" cy="11" r="8.800" stroke="#000" strokeWidth="2.600" /></Icon>
        <input type="text" aria-label="Search" placeholder="Type here to search" className="ml-[9px] min-w-0 flex-1 bg-transparent text-[14px] placeholder:text-[#2b2b2b]" />
        <Icon w={12} h={18}><path d="M3.500 1.500h5v10h-5zM1 8.500v5h10v-5M6 14v3M3 16.500h6" stroke="#333" /></Icon>
      </label>
      {apps.map((a) => (
        <button key={a.name} aria-label={a.name} className="relative flex w-[49px] items-center justify-center">
          {a.art}
          {a.running && <span className="absolute right-[4px] bottom-0 left-[5px] h-[2px] bg-[#76b9ed]" />}
        </button>
      ))}
      <div className="ml-auto flex items-center text-[11px]">
        <span className="text-[#d8d8d8]">Desktop</span>
        <span className="mb-[20px] ml-[8px] text-[14px] leading-none">»</span>
        <button aria-label="People" className="ml-[24px]">
          <Icon w={16} h={16}><circle cx="11" cy="4" r="3" stroke="#fff" /><path d="M8 11c0-5 6-5 7 0" stroke="#fff" /><circle cx="5" cy="9" r="2.500" stroke="#fff" /><path d="M1.500 15.500c0-5 7-5 7 0" stroke="#fff" /></Icon>
        </button>
        <button aria-label="Show hidden icons" className="ml-[21px]"><Icon w={14} h={8}><path d="M1 7l6-6 6 6" stroke="#fff" strokeWidth="1.300" /></Icon></button>
        <button aria-label="Volume" className="ml-[9px]"><Icon w={16} h={14}><path d="M0.500 4.500h2l4-3.500v12l-4-3.500h-2zM9 5c1 1 1 3 0 4M11 3c2 2 2 6 0 8" stroke="#fff" /><path d="M13 1c3 3 3 9 0 12" stroke="#777" /></Icon></button>
        <button aria-label="Network" className="ml-[9px]"><Icon w={16} h={14}><path d="M4 2.500h11.500v8H3.500V6M9.500 11v2.500M6 13.500h7M0.500 0.500h4v4h-4zM2.500 5v9" stroke="#fff" /></Icon></button>
        <time className="mb-[2px] ml-[10px] w-[52px] text-center leading-[18px]">1:59 PM<br />2/4/2019</time>
        <button aria-label="Notifications, 2" className="relative ml-[18px] flex h-[24px] w-[24px]">
          <Icon w={17} h={17}><path d="M0 0h16v12H7v4l-4-4H0z" fill="#fff" /><path d="M3 3.500h10M3 6.500h10M3 9.500h7" stroke="#080808" /></Icon>
          <span className="absolute right-0 bottom-0 flex size-[16px] items-center justify-center rounded-full border border-[#777] bg-[#333] text-[11px] leading-none">2</span>
        </button>
        <span className="mr-[4px] ml-[11px] h-[39px] w-px bg-[#555]" />
      </div>
    </footer>
  );
}

export default function App() {
  return (
    <div className="flex min-h-screen flex-col bg-white">
      <Defs />
      <TitleBar />
      <TabStrip />
      <QuickBar />
      <main className="relative flex flex-1 flex-col overflow-hidden">
        <CanvasGrid />
        <div className="relative flex flex-1 justify-between">
          <div className="pt-[4px] pl-[4px]">
            <Toolbar />
            <div className="mt-[4px]"><PanelBar title="BROWSER" open /></div>
            <Tree />
          </div>
          <div className="flex flex-col"><ViewCube /><QuickSetup /></div>
        </div>
        <div className={`${SANS} relative mt-[14px] mb-[4px] grid grid-cols-[1fr_auto_1fr] items-center`}>
          <div className="pl-[4px]"><PanelBar title="COMMENTS" open={false} /></div>
          <NavBar />
          <div className="flex items-center justify-end gap-[12px] pr-[10px] text-[11px] font-bold text-[#222]">
            Sketch1
            <Icon w={16} h={14}>
              <path d="M8 1l7 12H1z" fill="url(#gold)" stroke="#3a3210" strokeLinejoin="round" />
              <path d="M8 5v4M8 10.500v1.500" stroke="#222" strokeWidth="1.600" />
            </Icon>
          </div>
        </div>
      </main>
      <Timeline />
      <Taskbar />
    </div>
  );
}
